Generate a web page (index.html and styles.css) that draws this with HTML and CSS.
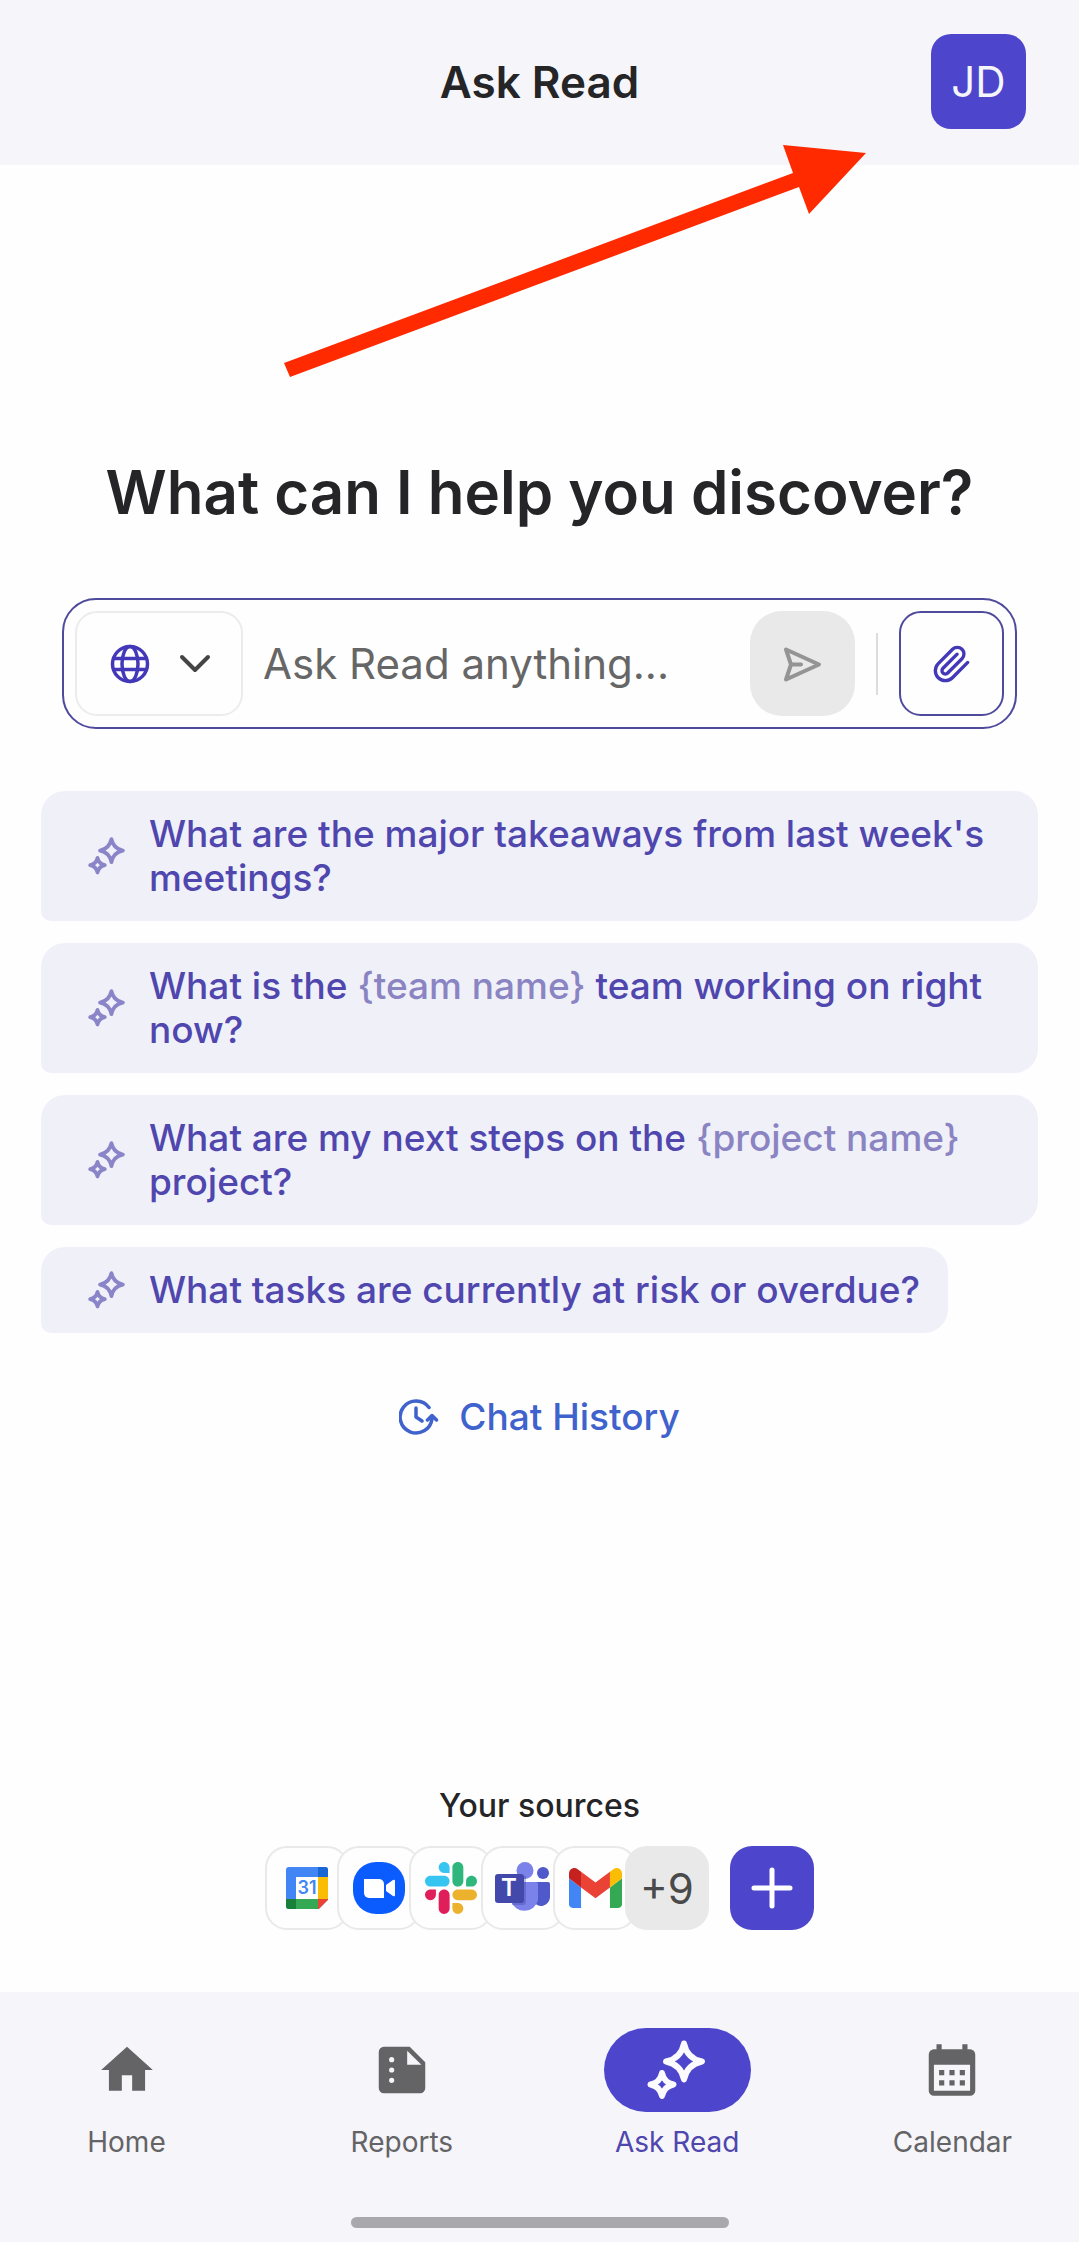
FILE: index.html
```html
<!DOCTYPE html>
<html lang="en">
<head>
  <meta charset="UTF-8">
  <meta name="viewport" content="width=device-width, initial-scale=1.0">
  <title>Ask Read</title>
  <link rel="stylesheet" href="styles.css">
</head>
<body>
  <!-- shared sparkle icon -->
  <svg class="sprite" aria-hidden="true">
    <symbol id="sparkle" viewBox="0 0 60 60">
      <path d="M37 3.500q3 15 18 18q-15 3-18 18q-3-15-18-18q15-3 18-18z"></path>
      <path d="M15 33q2 9.500 11.500 11.500q-9.500 2-11.500 11.500q-2-9.500-11.500-11.500q9.500-2 11.500-11.500z"></path>
    </symbol>
  </svg>

  <div class="app">
    <header class="header">
      <h1 class="title">Ask Read</h1>
      <button class="avatar" aria-label="Account">JD</button>
    </header>

    <svg class="arrow" viewBox="0 0 582 233" aria-hidden="true">
      <path d="M0 218L509 28L499 0L582 8L525 69L515 42L6 232z" fill="#ff2a00"></path>
    </svg>

    <main class="content">
      <h2 class="heading">What can I help you discover?</h2>

      <form class="ask-box">
        <button class="scope-button" type="button" aria-label="Search scope">
          <svg width="40" height="40" viewBox="0 0 40 40" fill="none" stroke="#4338b8" stroke-width="3.500">
            <circle cx="20" cy="20" r="17.500"></circle>
            <ellipse cx="20" cy="20" rx="8" ry="17.500"></ellipse>
            <path d="M3.500 14.500h33M3.500 25.500h33"></path>
          </svg>
          <svg width="40" height="40" viewBox="0 0 40 40" fill="none" stroke="#444" stroke-width="4" stroke-linecap="round" stroke-linejoin="round">
            <path d="M7 13l13 13 13-13"></path>
          </svg>
        </button>
        <input class="ask-input" type="text" placeholder="Ask Read anything..." aria-label="Ask Read anything">
        <button class="send-button" type="button" aria-label="Send">
          <svg width="40" height="40" viewBox="0 0 40 40" fill="none" stroke="#949494" stroke-width="4" stroke-linecap="round" stroke-linejoin="round">
            <path d="M3 5.500l33 15L3 35.500l5-15zM8 20.500h10"></path>
          </svg>
        </button>
        <span class="divider"></span>
        <button class="attach-button" type="button" aria-label="Attach file">
          <svg width="40" height="40" viewBox="0 0 24 24" fill="none" stroke="#4338b8" stroke-width="2" stroke-linecap="round" stroke-linejoin="round">
            <path d="m21.440 11.050-9.190 9.190a6 6 0 0 1-8.490-8.490l8.570-8.570A4 4 0 1 1 18 8.840l-8.590 8.570a2 2 0 0 1-2.830-2.830l8.490-8.480"></path>
          </svg>
        </button>
      </form>

      <div class="suggestions">
        <button class="suggestion">
          <svg class="spark"><use href="#sparkle"></use></svg>
          <span>What are the major takeaways from last week's meetings?</span>
        </button>
        <button class="suggestion">
          <svg class="spark"><use href="#sparkle"></use></svg>
          <span>What is the <span class="slot">{team name}</span> team working on right now?</span>
        </button>
        <button class="suggestion">
          <svg class="spark"><use href="#sparkle"></use></svg>
          <span>What are my next steps on the <span class="slot">{project name}</span> project?</span>
        </button>
        <button class="suggestion">
          <svg class="spark"><use href="#sparkle"></use></svg>
          <span>What tasks are currently at risk or overdue?</span>
        </button>
      </div>

      <a class="history" href="#">
        <svg width="40" height="40" viewBox="0 0 40 40" fill="none" stroke="#3f62cc" stroke-width="3.500" stroke-linecap="round" stroke-linejoin="round">
          <path d="M30 10.500A16 16 0 1 0 33 22M17 11v9l6 4M28.500 23l4.500-4.500 4.500 4.500"></path>
        </svg>
        <span>Chat History</span>
      </a>

      <section class="sources">
        <h3 class="sources-title">Your sources</h3>
        <div class="sources-row">
          <span class="tile">
            <!-- Google Calendar -->
            <svg width="42" height="42" viewBox="0 0 42 42">
              <rect width="42" height="42" rx="3" fill="#4285f4"></rect>
              <path d="M32 0h7a3 3 0 0 1 3 3v7H32z" fill="#1967d2"></path>
              <path d="M32 10h10v22H32z" fill="#fbbc04"></path>
              <path d="M0 32h10v10H3a3 3 0 0 1-3-3z" fill="#188038"></path>
              <path d="M10 32h22v10H10z" fill="#34a853"></path>
              <path d="M32 32h10v1l-9 9h-1z" fill="#ea4335"></path>
              <path d="M42 33v9h-9z" fill="#fff"></path>
              <path d="M10 10h22v22H10z" fill="#fff"></path>
              <text x="21" y="27" text-anchor="middle" class="cal-num">31</text>
            </svg>
          </span>
          <span class="tile">
            <!-- Zoom -->
            <svg width="52" height="52" viewBox="0 0 52 52">
              <rect width="52" height="52" rx="23" fill="#0b5cff"></rect>
              <path d="M11 17h15a5 5 0 0 1 5 5v14H16a5 5 0 0 1-5-5z" fill="#fff"></path>
              <path d="M33 23l7-5q2-1 2 1v14q0 2-2 1l-7-5z" fill="#fff"></path>
            </svg>
          </span>
          <span class="tile">
            <!-- Slack -->
            <svg width="52" height="52" viewBox="0 0 122.800 122.800">
              <path fill="#e01e5a" d="M25.800 77.600c0 7.100-5.800 12.900-12.900 12.900S0 84.700 0 77.600s5.800-12.900 12.900-12.900h12.900zM32.300 77.600c0-7.100 5.800-12.900 12.900-12.900s12.900 5.800 12.900 12.900v32.300c0 7.100-5.800 12.900-12.900 12.900s-12.900-5.800-12.900-12.900z"></path>
              <path fill="#36c5f0" d="M45.200 25.800c-7.100 0-12.900-5.800-12.900-12.900S38.100 0 45.200 0s12.900 5.800 12.900 12.900v12.900zM45.200 32.300c7.100 0 12.900 5.800 12.900 12.900s-5.800 12.900-12.900 12.900H12.900C5.800 58.100 0 52.300 0 45.200s5.800-12.900 12.900-12.900z"></path>
              <path fill="#2eb67d" d="M97 45.200c0-7.100 5.800-12.900 12.900-12.900s12.900 5.800 12.900 12.900-5.800 12.900-12.900 12.900H97zM90.500 45.200c0 7.100-5.800 12.900-12.900 12.900s-12.900-5.800-12.900-12.900V12.900C64.700 5.800 70.500 0 77.600 0s12.900 5.800 12.900 12.900z"></path>
              <path fill="#ecb22e" d="M77.600 97c7.100 0 12.900 5.800 12.900 12.900s-5.800 12.900-12.900 12.900-12.900-5.800-12.900-12.900V97zM77.600 90.500c-7.100 0-12.900-5.800-12.900-12.900s5.800-12.900 12.900-12.900h32.300c7.100 0 12.900 5.800 12.900 12.900s-5.800 12.900-12.900 12.900z"></path>
            </svg>
          </span>
          <span class="tile">
            <!-- Microsoft Teams -->
            <svg width="56" height="52" viewBox="0 0 56 52">
              <circle cx="48" cy="11" r="6" fill="#5059c9"></circle>
              <path d="M38 20h15a2 2 0 0 1 2 2v13a9 9 0 0 1-17 4z" fill="#5059c9"></path>
              <circle cx="30" cy="8.500" r="8.500" fill="#7b83eb"></circle>
              <path d="M18 20h23a2 2 0 0 1 2 2v16a14 14 0 0 1-27 1V22a2 2 0 0 1 2-2z" fill="#7b83eb"></path>
              <path d="M16 14h15v26a3 3 0 0 1-3 3H17z" fill="#3c4299" opacity="0.350"></path>
              <rect y="12" width="29" height="29" rx="3" fill="#4249ab"></rect>
              <text x="14" y="34" text-anchor="middle" class="teams-letter">T</text>
            </svg>
          </span>
          <span class="tile">
            <!-- Gmail -->
            <svg width="53" height="40" viewBox="52 42 88 66">
              <path fill="#4285f4" d="M58 108h14V74L52 59v43c0 3.320 2.690 6 6 6"></path>
              <path fill="#34a853" d="M120 108h14c3.320 0 6-2.690 6-6V59l-20 15"></path>
              <path fill="#fbbc04" d="M120 48v26l20-15v-8c0-7.420-8.470-11.650-14.400-7.200"></path>
              <path fill="#ea4335" d="M72 74V48l24 18 24-18v26L96 92"></path>
              <path fill="#c5221f" d="M52 51v8l20 15V48l-5.600-4.200c-5.940-4.450-14.400-.22-14.400 7.200"></path>
            </svg>
          </span>
          <span class="tile more">+9</span>
          <button class="add-button" aria-label="Add source">
            <svg width="42" height="42" viewBox="0 0 42 42" fill="none" stroke="#fff" stroke-width="5" stroke-linecap="round">
              <path d="M21 3v36M3 21h36"></path>
            </svg>
          </button>
        </div>
      </section>
    </main>

    <footer class="footer">
      <nav class="tabs">
        <a class="tab" href="#">
          <span class="tab-icon">
            <svg width="62" height="62" viewBox="0 0 24 24" fill="currentColor"><path d="M10 20v-6h4v6h5v-8h3L12 3 2 12h3v8z"></path></svg>
          </span>
          <span>Home</span>
        </a>
        <a class="tab" href="#">
          <span class="tab-icon">
            <svg width="62" height="62" viewBox="0 0 24 24" fill="currentColor" fill-rule="evenodd"><path d="M15 3H5a2 2 0 0 0-2 2v14a2 2 0 0 0 2 2h14a2 2 0 0 0 2-2V9zM8 17a1 1 0 1 1 0-2 1 1 0 0 1 0 2zM8 13a1 1 0 1 1 0-2 1 1 0 0 1 0 2zM8 9a1 1 0 1 1 0-2 1 1 0 0 1 0 2zM14 10V4.500l5.500 5.500z"></path></svg>
          </span>
          <span>Reports</span>
        </a>
        <a class="tab active" href="#">
          <span class="tab-icon">
            <svg class="spark-large"><use href="#sparkle"></use></svg>
          </span>
          <span>Ask Read</span>
        </a>
        <a class="tab" href="#">
          <span class="tab-icon">
            <svg width="62" height="62" viewBox="0 0 24 24" fill="currentColor" fill-rule="evenodd"><path d="M6 2h2v2h8V2h2v2h1a2 2 0 0 1 2 2v14a2 2 0 0 1-2 2H5a2 2 0 0 1-2-2V6a2 2 0 0 1 2-2h1zM5 10v10h14V10zM7 12h2v2H7zM11 12h2v2h-2zM15 12h2v2h-2zM7 16h2v2H7zM11 16h2v2h-2zM15 16h2v2h-2z"></path></svg>
          </span>
          <span>Calendar</span>
        </a>
      </nav>
      <div class="home-indicator"></div>
    </footer>
  </div>
</body>
</html>
```

FILE: styles.css
```css
* {
  box-sizing: border-box;
}

body {
  margin: 0;
  font-family: 'Inter', sans-serif;
  background: #fefefe;
  color: #252527;
}

button {
  padding: 0;
  border: none;
  background: none;
  font-family: inherit;
  cursor: pointer;
}

a {
  color: inherit;
  text-decoration: none;
}

svg {
  display: block;
  flex-shrink: 0;
}

h1, h2, h3 {
  margin: 0;
}

.sprite {
  position: absolute;
  width: 0;
  height: 0;
}

.app {
  position: relative;
  display: flex;
  flex-direction: column;
  min-height: 100vh;
}

.header {
  display: grid;
  grid-template-columns: 1fr auto 1fr;
  align-items: center;
  padding: 34px 53px 36px;
  background: #f5f5fa;
}

.title {
  grid-column: 2;
  font-size: 44px;
  font-weight: 600;
}

.avatar {
  justify-self: end;
  width: 95px;
  height: 95px;
  border-radius: 20px;
  background: #4d46cd;
  color: #f5f5fa;
  font-size: 42px;
}

/* callout arrow laid over the header */
.arrow {
  position: absolute;
  left: 284px;
  top: 145px;
  width: 582px;
  height: 233px;
}

.content {
  flex: 1;
  display: flex;
  flex-direction: column;
  padding-top: 287px;
}

.heading {
  font-size: 60px;
  line-height: 80px;
  font-weight: 600;
  text-align: center;
}

.ask-box {
  display: flex;
  align-items: center;
  margin: 66px 62px 0;
  padding: 11px;
  border: 2px solid #4f4a9c;
  border-radius: 34px;
}

.scope-button {
  display: flex;
  align-items: center;
  gap: 25px;
  width: 168px;
  height: 105px;
  padding: 0 33px;
  border: 2px solid #ececec;
  border-radius: 22px;
}

.ask-input {
  flex: 1;
  min-width: 0;
  padding: 0 20px;
  border: none;
  outline: none;
  background: none;
  font-family: inherit;
  font-size: 42px;
  color: #252527;
}

.ask-input::placeholder {
  color: #666;
  opacity: 1;
}

.send-button,
.attach-button {
  display: flex;
  align-items: center;
  justify-content: center;
  width: 105px;
  height: 105px;
  border-radius: 32px;
  background: #e9e9e9;
}

.attach-button {
  border: 2px solid #4f4a9c;
  border-radius: 22px;
  background: none;
}

.divider {
  width: 2px;
  height: 62px;
  margin: 0 21px;
  background: #dcdcdc;
}

.suggestions {
  display: flex;
  flex-direction: column;
  align-items: flex-start;
  gap: 22px;
  margin: 62px 41px 0;
}

.suggestion {
  display: flex;
  align-items: center;
  gap: 23px;
  padding: 21px 28px 21px 47px;
  border-radius: 24px 24px 24px 10px;
  background: #f0f0f9;
  color: #4f46ae;
  font-size: 37px;
  line-height: 44px;
  font-weight: 500;
  text-align: left;
}

.slot {
  color: #8a84c2;
}

.spark,
.spark-large {
  width: 38px;
  height: 38px;
  fill: none;
  stroke: #8a84c8;
  stroke-width: 6;
  stroke-linejoin: round;
}

.spark-large {
  width: 60px;
  height: 60px;
  stroke: #fafaff;
}

.history {
  display: flex;
  align-items: center;
  gap: 20px;
  align-self: center;
  margin-top: 62px;
  color: #3f62cc;
  font-size: 37px;
  line-height: 44px;
  font-weight: 500;
}

.sources {
  margin-top: auto;
  padding: 40px 0 62px;
}

.sources-title {
  margin-bottom: 20px;
  font-size: 32px;
  line-height: 40px;
  font-weight: 500;
  text-align: center;
}

.sources-row {
  display: flex;
  justify-content: center;
}

.tile {
  display: flex;
  align-items: center;
  justify-content: center;
  width: 84px;
  height: 84px;
  margin-right: -12px;
  border: 2px solid #e9e9e9;
  border-radius: 22px;
  background: #fefefe;
}

.tile.more {
  margin-right: 21px;
  background: #e9e9e9;
  color: #4a4a4a;
  font-size: 42px;
}

.cal-num {
  font-size: 18px;
  font-weight: 600;
  fill: #4285f4;
}

.teams-letter {
  font-size: 24px;
  font-weight: 600;
  fill: #fff;
}

.add-button {
  display: flex;
  align-items: center;
  justify-content: center;
  width: 84px;
  height: 84px;
  border-radius: 22px;
  background: #4d46cd;
}

.footer {
  padding: 36px 53px 14px;
  background: #f5f5fa;
}

.tabs {
  display: flex;
  justify-content: space-between;
}

.tab {
  display: flex;
  flex-direction: column;
  align-items: center;
  gap: 12px;
  width: 147px;
  color: #646466;
  font-size: 28px;
  line-height: 36px;
}

.tab-icon {
  display: flex;
  align-items: center;
  justify-content: center;
  width: 100%;
  height: 84px;
  border-radius: 42px;
}

.tab.active {
  color: #4f46ae;
}

.tab.active .tab-icon {
  background: #4d46cd;
}

.home-indicator {
  width: 378px;
  height: 11px;
  margin: 57px auto 0;
  border-radius: 6px;
  background: #a8a8ad;
}
```
